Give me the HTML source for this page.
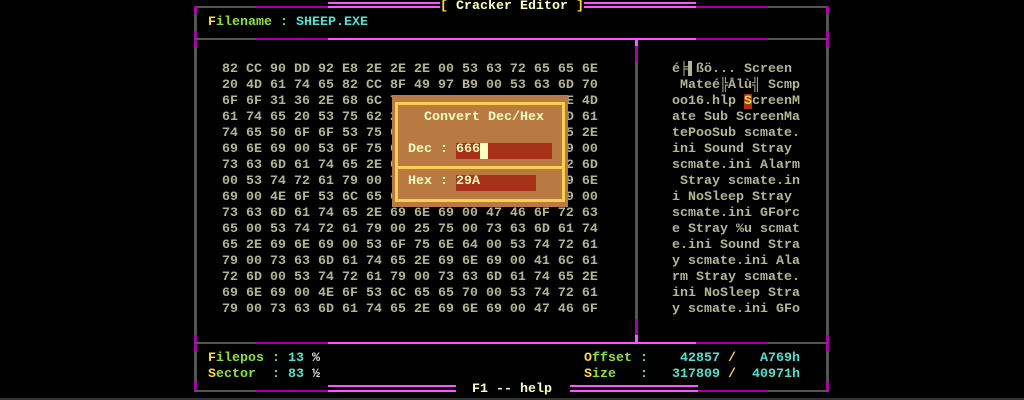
<!DOCTYPE html>
<html><head><meta charset="utf-8"><style>
*{margin:0;padding:0;box-sizing:border-box}
body{width:1024px;height:400px;background:#000;position:relative;overflow:hidden;font-family:"Liberation Mono","DejaVu Sans Mono",monospace;font-weight:bold;font-size:13.33px;line-height:16px}
.a{position:absolute}
.t{position:absolute;white-space:pre}
.g{background:#555}.p{background:#a0a}.k{background:#f5f}
.hx{color:#b4b496}
.y{color:#ffd84a}.gr{color:#8ee040}.c{color:#55e0cc}
</style></head><body>
<div class="a g" style="left:194px;top:6px;width:62px;height:2px"></div>
<div class="a p" style="left:256px;top:6px;width:72px;height:2px"></div>
<div class="a k" style="left:328px;top:2px;width:112px;height:2px"></div>
<div class="a k" style="left:328px;top:6px;width:112px;height:2px"></div>
<div class="a k" style="left:584px;top:2px;width:112px;height:2px"></div>
<div class="a k" style="left:584px;top:6px;width:112px;height:2px"></div>
<div class="a p" style="left:696px;top:6px;width:72px;height:2px"></div>
<div class="a g" style="left:768px;top:6px;width:60px;height:2px"></div>
<div class="t" style="left:440px;top:-1px;color:#ffffc0"><span class="y">[</span> Cracker Editor <span class="y">]</span></div>
<div class="a g" style="left:194px;top:6px;width:3px;height:386px"></div>
<div class="a p" style="left:194px;top:6px;width:3px;height:8px"></div>
<div class="a p" style="left:194px;top:31px;width:3px;height:16px"></div>
<div class="a p" style="left:194px;top:335px;width:3px;height:16px"></div>
<div class="a p" style="left:194px;top:382px;width:3px;height:10px"></div>
<div class="a g" style="left:826px;top:6px;width:3px;height:386px"></div>
<div class="a p" style="left:826px;top:6px;width:3px;height:8px"></div>
<div class="a p" style="left:826px;top:31px;width:3px;height:16px"></div>
<div class="a p" style="left:826px;top:335px;width:3px;height:16px"></div>
<div class="a p" style="left:826px;top:382px;width:3px;height:10px"></div>
<div class="a g" style="left:194px;top:38px;width:62px;height:2px"></div>
<div class="a p" style="left:256px;top:38px;width:72px;height:2px"></div>
<div class="a k" style="left:328px;top:38px;width:368px;height:2px"></div>
<div class="a p" style="left:696px;top:38px;width:72px;height:2px"></div>
<div class="a g" style="left:768px;top:38px;width:60px;height:2px"></div>
<div class="t" style="left:208px;top:15px"><span class="y">F</span><span class="gr">ilename :</span> <span class="c">SHEEP.EXE</span></div>
<div class="a g" style="left:635px;top:40px;width:3px;height:304px"></div>
<div class="a k" style="left:635px;top:40px;width:3px;height:6px"></div>
<div class="a p" style="left:635px;top:46px;width:3px;height:16px"></div>
<div class="a p" style="left:635px;top:319px;width:3px;height:16px"></div>
<div class="a k" style="left:635px;top:335px;width:3px;height:9px"></div>
<div class="a g" style="left:194px;top:342px;width:62px;height:2px"></div>
<div class="a p" style="left:256px;top:342px;width:72px;height:2px"></div>
<div class="a k" style="left:328px;top:342px;width:368px;height:2px"></div>
<div class="a p" style="left:696px;top:342px;width:72px;height:2px"></div>
<div class="a g" style="left:768px;top:342px;width:60px;height:2px"></div>
<div class="a g" style="left:194px;top:390px;width:62px;height:2px"></div>
<div class="a p" style="left:256px;top:390px;width:72px;height:2px"></div>
<div class="a k" style="left:328px;top:385px;width:128px;height:2px"></div>
<div class="a k" style="left:328px;top:390px;width:128px;height:2px"></div>
<div class="a k" style="left:570px;top:385px;width:128px;height:2px"></div>
<div class="a k" style="left:570px;top:390px;width:128px;height:2px"></div>
<div class="a p" style="left:698px;top:390px;width:70px;height:2px"></div>
<div class="a g" style="left:768px;top:390px;width:60px;height:2px"></div>
<div class="a g" style="left:0;top:398px;width:1024px;height:2px;background:#333"></div>
<div class="t" style="left:472px;top:382px;color:#ffffc0">F1 -- help</div>
<div class="t hx" style="left:222px;top:62px">82 CC 90 DD 92 E8 2E 2E 2E 00 53 63 72 65 65 6E
20 4D 61 74 65 82 CC 8F 49 97 B9 00 53 63 6D 70
6F 6F 31 36 2E 68 6C 70 00 53 63 72 65 65 6E 4D
61 74 65 20 53 75 62 20 53 63 72 65 65 6E 4D 61
74 65 50 6F 6F 53 75 62 00 73 63 6D 61 74 65 2E
69 6E 69 00 53 6F 75 6E 64 00 53 74 72 61 79 00
73 63 6D 61 74 65 2E 69 6E 69 00 41 6C 61 72 6D
00 53 74 72 61 79 00 73 63 6D 61 74 65 2E 69 6E
69 00 4E 6F 53 6C 65 65 70 00 53 74 72 61 79 00
73 63 6D 61 74 65 2E 69 6E 69 00 47 46 6F 72 63
65 00 53 74 72 61 79 00 25 75 00 73 63 6D 61 74
65 2E 69 6E 69 00 53 6F 75 6E 64 00 53 74 72 61
79 00 73 63 6D 61 74 65 2E 69 6E 69 00 41 6C 61
72 6D 00 53 74 72 61 79 00 73 63 6D 61 74 65 2E
69 6E 69 00 4E 6F 53 6C 65 65 70 00 53 74 72 61
79 00 73 63 6D 61 74 65 2E 69 6E 69 00 47 46 6F</div>
<div class="t hx" style="left:672px;top:62px">é╞▌ßö... Screen
 Mateé╠Ålù╣ Scmp
oo16.hlp <span style="background:#a83218;color:#ffd84a">S</span>creenM
ate Sub ScreenMa
tePooSub scmate.
ini Sound Stray 
scmate.ini Alarm
 Stray scmate.in
i NoSleep Stray 
scmate.ini GForc
e Stray %u scmat
e.ini Sound Stra
y scmate.ini Ala
rm Stray scmate.
ini NoSleep Stra
y scmate.ini GFo</div>
<div class="a" style="left:392px;top:95px;width:176px;height:112px;background:#b87a42"></div>
<div class="a" style="left:395px;top:102px;width:170px;height:100px;border:3px solid #f8d050"></div>
<div class="a" style="left:395px;top:166px;width:170px;height:3px;background:#f8d050"></div>
<div class="t" style="left:424px;top:110px;color:#ffffc0">Convert Dec/Hex</div>
<div class="a" style="left:456px;top:143px;width:96px;height:16px;background:#a83218"></div>
<div class="a" style="left:480px;top:143px;width:8px;height:16px;background:#ffffc0"></div>
<div class="t" style="left:408px;top:142px;color:#ffffc0">Dec : 666</div>
<div class="a" style="left:456px;top:175px;width:80px;height:16px;background:#a83218"></div>
<div class="t" style="left:408px;top:174px;color:#ffffc0">Hex : 29A</div>
<div class="t" style="left:208px;top:351px"><span class="y">F</span><span class="gr">ilepos :</span> <span class="c">13</span> <span style="color:#ddd">%</span>
<span class="y">S</span><span class="gr">ector  :</span> <span class="c">83</span> <span style="color:#ddd">½</span></div>
<div class="t" style="left:584px;top:351px"><span class="y">O</span><span class="gr">ffset :</span>    <span class="c">42857</span> <span class="y">/</span>   <span class="c">A769h</span>
<span class="y">S</span><span class="gr">ize   :</span>   <span class="c">317809</span> <span class="y">/</span>  <span class="c">40971h</span></div>
</body></html>
